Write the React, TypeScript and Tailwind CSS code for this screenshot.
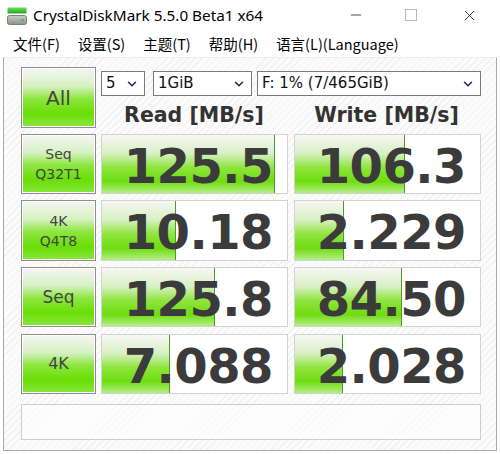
import { ChevronDown, X, Minus } from "lucide-react";

type Row = { top: string; bottom?: string; size: string; read: string; write: string; rw: number; ww: number; h: string };

const rows: Row[] = [
  { top: "Seq", bottom: "Q32T1", size: "text-[14px]", read: "125.5", write: "106.3", rw: 173, ww: 110, h: "h-[60px]" },
  { top: "4K", bottom: "Q4T8", size: "text-[14px]", read: "10.18", write: "2.229", rw: 74, ww: 49, h: "h-[61px]" },
  { top: "Seq", size: "text-[17px]", read: "125.8", write: "84.50", rw: 113, ww: 107, h: "h-[60px]" },
  { top: "4K", size: "text-[16px]", read: "7.088", write: "2.028", rw: 68, ww: 48, h: "h-[60px]" },
];

const menu = ["文件(F)", "设置(S)", "主题(T)", "帮助(H)", "语言(L)(Language)"];

function DiskIcon() {
  return (
    <svg width="20" height="18" viewBox="0 0 20 18">
      <defs>
        <linearGradient id="lid" x1="0" y1="0" x2="0" y2="1">
          <stop offset="0" stopColor="#6fe05a" />
          <stop offset="1" stopColor="#1fa52a" />
        </linearGradient>
        <linearGradient id="body" x1="0" y1="0" x2="0" y2="1">
          <stop offset="0" stopColor="#c9cdc9" />
          <stop offset="1" stopColor="#8c918c" />
        </linearGradient>
      </defs>
      <rect x="0.5" y="0.5" width="19" height="6" fill="url(#lid)" />
      <rect x="0.5" y="8.5" width="19" height="9" rx="2" fill="url(#body)" stroke="#7b807b" />
      <rect x="14" y="12" width="3" height="2" fill="#3bd12a" />
    </svg>
  );
}

function Combo({ w, text }: { w: string; text: string }) {
  return (
    <div className={`${w} h-[25px] bg-white border border-[#7a7a7a] flex items-center justify-between pl-[4px] pr-[5px] text-[15px] text-[#111]`}>
      <span>{text}</span>
      <ChevronDown className="w-[14px] h-[14px] text-[#1c2b50]" strokeWidth={2.6} />
    </div>
  );
}

function LabelButton({ children, h }: { children: React.ReactNode; h: string }) {
  return (
    <div className={`w-[75px] ${h} border border-[#8e8e8e] p-px bg-white`}>
      <div className="w-full h-full bg-[linear-gradient(180deg,#f4f6f2_0%,#d6f1c2_30%,#8ee640_52%,#6ade05_78%,#86e63a_100%)] flex flex-col items-center justify-center text-[#444] leading-[20px]">
        {children}
      </div>
    </div>
  );
}

function Cell({ value, bar, w, h }: { value: string; bar: number; w: string; h: string }) {
  return (
    <div className={`${w} ${h} relative bg-white border border-[#d2d2d2]`}>
      <div
        className="absolute left-0 top-0 bottom-0 border-r border-[#4c9a2a] bg-[linear-gradient(180deg,#f6f7f5_0%,#d8f0c4_32%,#8fe53f_56%,#6fdc10_80%,#b4ef86_100%)]"
        style={{ width: bar }}
      />
      <div className="relative h-full flex items-center justify-end pr-[14px] pt-[3px] font-['DejaVu_Sans',sans-serif] font-bold text-[48px] text-[#3b3b3b] tracking-[-0.5px]">
        {value}
      </div>
    </div>
  );
}

export default function App() {
  return (
    <div className="w-[500px] h-[454px] bg-white flex flex-col font-['DejaVu_Sans',sans-serif] overflow-hidden">
      {/* title bar */}
      <div className="h-[30px] flex items-center shrink-0">
        <div className="ml-[7px] mt-[1px]">
          <DiskIcon />
        </div>
        <span className="ml-[6px] font-['Noto_Sans',sans-serif] text-[15.3px] text-black">CrystalDiskMark 5.5.0 Beta1 x64</span>
        <div className="ml-auto flex items-center">
          <Minus className="w-[16px] h-[16px] text-[#222]" strokeWidth={1.2} />
          <div className="ml-[41px] w-[12px] h-[12px] border border-[#b8b8b8]" />
          <X className="ml-[44px] mr-[22px] w-[17px] h-[17px] text-[#222]" strokeWidth={1.2} />
        </div>
      </div>

      {/* menu */}
      <div className="h-[27px] flex items-center pl-[13px] gap-[18px] font-['Noto_Sans_CJK_SC',sans-serif] text-[14.5px] text-black shrink-0">
        {menu.map((m) => (
          <span key={m}>{m}</span>
        ))}
      </div>

      {/* client area */}
      <div className="mx-[3px] mb-[3px] flex-1 border-l border-r border-b border-t border-t-[#ececec] border-[#a9a9a9] bg-[repeating-linear-gradient(135deg,#f1f1f1_0px,#f1f1f1_1px,#fbfbfb_1px,#fbfbfb_5px)] pl-[17px] pt-[9px]">
        <div className="flex gap-[5px]">
          <LabelButton h="h-[61px]">
            <span className="text-[20px]">All</span>
          </LabelButton>
          <div className="flex flex-col">
            <div className="flex mt-[4px]">
              <Combo w="w-[44px]" text="5" />
              <Combo w="w-[99px] ml-[8px]" text="1GiB" />
              <Combo w="w-[224px] ml-[5px]" text="F: 1% (7/465GiB)" />
            </div>
            <div className="flex mt-[7px] font-bold text-[20.5px] text-[#333] leading-[24px]">
              <div className="w-[186px] text-center">Read [MB/s]</div>
              <div className="w-[187px] ml-[6px] text-center">Write [MB/s]</div>
            </div>
          </div>
        </div>

        {rows.map((r, i) => (
          <div key={i} className={`flex gap-[5px] ${i === 3 ? "mt-[7px]" : "mt-[6px]"}`}>
            <LabelButton h={r.h}>
              <span className={r.size}>{r.top}</span>
              {r.bottom && <span className="text-[14px]">{r.bottom}</span>}
            </LabelButton>
            <Cell value={r.read} bar={r.rw} w="w-[187px]" h={r.h} />
            <Cell value={r.write} bar={r.ww} w="w-[187px] ml-[1px]" h={r.h} />
          </div>
        ))}

        <div className="mt-[10px] w-[460px] h-[36px] bg-white/60 border border-[#cdcdcd]" />
      </div>
    </div>
  );
}
